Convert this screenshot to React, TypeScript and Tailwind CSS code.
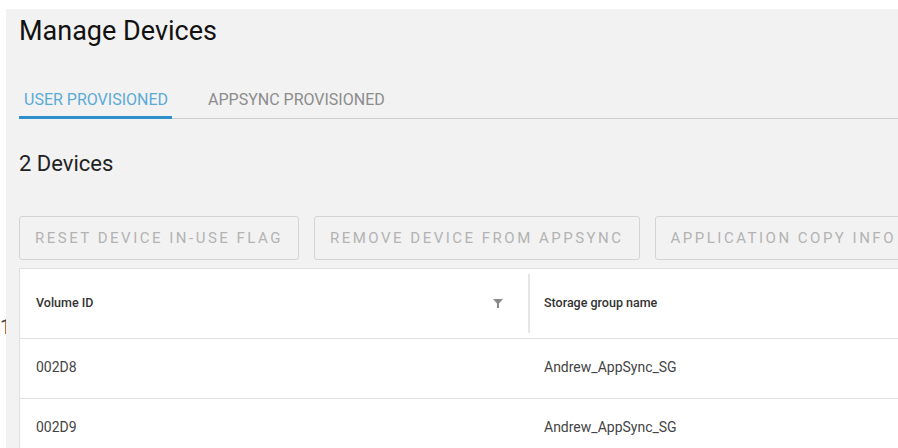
const buttons = ['RESET DEVICE IN-USE FLAG', 'REMOVE DEVICE FROM APPSYNC', 'APPLICATION COPY INFO']

const rows = [
  { volume: '002D8', group: 'Andrew_AppSync_SG' },
  { volume: '002D9', group: 'Andrew_AppSync_SG' },
]

const FilterIcon = () => (
  <svg width="10" height="9" viewBox="0 0 10 9" className="text-[#8a8a8a]">
    <path d="M0 0h10L6 4.5V9H4V4.5z" fill="currentColor" />
  </svg>
)

const DeviceTable = () => {
  return (
    <div className="w-[1000px] bg-white border border-[#e0e0e0] text-[#333]">
      <div className="flex h-[70px] border-b border-[#e0e0e0]">
        <div className="w-[508px] flex items-center justify-between pl-4 pr-[25px]">
          <span className="text-[12.5px] font-medium">Volume ID</span>
          <FilterIcon />
        </div>
        <div className="w-[2px] bg-[#e6e6e6] my-[5px]" />
        <div className="flex items-center pl-[14px]">
          <span className="text-[12.5px] font-medium">Storage group name</span>
        </div>
      </div>
      {rows.map((row) => (
        <div
          key={row.volume}
          className="flex h-[60px] items-center pb-[3px] border-b border-[#e0e0e0] text-[14px] text-[#444]"
        >
          <div className="w-[524px] pl-4">{row.volume}</div>
          <div>{row.group}</div>
        </div>
      ))}
    </div>
  )
}

const App = () => {
  return (
    <div className="w-[898px] h-[448px] overflow-hidden bg-white pt-[9px] font-['Roboto',sans-serif] flex">
      <div className="w-[6px] shrink-0 pt-[308px] text-[20px] text-[#444] leading-[20px]">1</div>
      <div className="w-[1100px] shrink-0 bg-[#f2f2f2] pl-[13px] pt-[4px]">
        <h1 className="text-[27px] leading-[36px] text-[#111]">Manage Devices</h1>

        <div className="mt-[39px] flex border-b border-[#cccccc] text-[16px]">
          <div className="pl-[5px] pr-[4px] pb-[4px] border-b-[3px] border-[#2e8fca] text-[#5aaad6] -mb-[1px]">
            USER PROVISIONED
          </div>
          <div className="ml-[36px] pb-[4px] text-[#8c8c8c]">APPSYNC PROVISIONED</div>
        </div>

        <div className="mt-[31px] text-[22px] leading-[28px] text-[#222]">2 Devices</div>

        <div className="mt-[38px] flex gap-[15px]">
          {buttons.map((label) => (
            <button
              key={label}
              className="h-[44px] shrink-0 px-[15px] border border-[#d4d4d4] rounded-[3px] text-[15px] tracking-[2.5px] text-[#b3b3b3]"
            >
              {label}
            </button>
          ))}
        </div>

        <div className="mt-[8px]">
          <DeviceTable />
        </div>
      </div>
    </div>
  )
}

export default App
